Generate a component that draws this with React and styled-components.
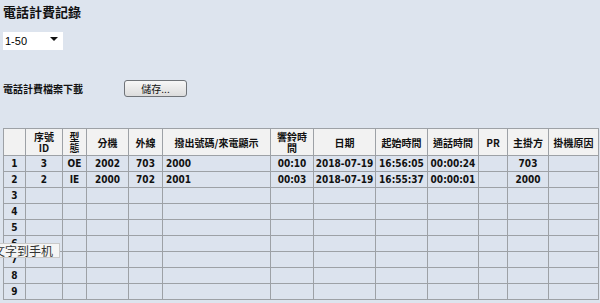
import React from 'react';
import styled, { createGlobalStyle } from 'styled-components';

const GlobalStyle = createGlobalStyle`
  html, body {
    margin: 0;
    padding: 0;
    background: #dde4ee;
    overflow: hidden;
  }
`;

const Page = styled.div`
  position: relative;
  width: 600px;
  height: 303px;
  padding: 3px 0 0 3px;
  box-sizing: border-box;
  background: #dde4ee;
  font-family: 'DejaVu Sans', 'Noto Sans CJK TC', sans-serif;
  color: #111;
`;

const Title = styled.h1`
  margin: 0;
  height: 18px;
  font-family: 'Noto Sans CJK TC', sans-serif;
  font-size: 13px;
  font-weight: 700;
  line-height: 18px;
`;

const SelectWrap = styled.div`
  position: relative;
  width: 60px;
  height: 18px;
  margin-top: 9px;
  &::after {
    content: '';
    position: absolute;
    right: 5px;
    top: 7px;
    border-left: 4px solid transparent;
    border-right: 4px solid transparent;
    border-top: 4px solid #111;
    pointer-events: none;
  }
`;

const RangeSelect = styled.select`
  appearance: none;
  width: 100%;
  height: 100%;
  border: none;
  outline: none;
  background: #fff;
  padding: 0 0 0 2px;
  font-family: 'Liberation Sans', Arial, sans-serif;
  font-size: 11px;
  color: #000;
`;

const DownloadRow = styled.div`
  display: flex;
  align-items: center;
  height: 17px;
  margin-top: 32px;
`;

const DownloadLabel = styled.span`
  width: 121px;
  font-family: 'Noto Sans CJK TC', sans-serif;
  font-size: 10px;
  font-weight: 700;
`;

const SaveButton = styled.button`
  width: 63px;
  height: 17px;
  padding: 0;
  border: 1px solid #6f7378;
  border-radius: 3px;
  background: linear-gradient(#f7f7f7, #dcdcdc);
  font-family: 'Noto Sans CJK TC', sans-serif;
  font-size: 10px;
  line-height: 14px;
  color: #111;
`;

const Grid = styled.table`
  margin-top: 31px;
  width: 595px;
  border-collapse: collapse;
  table-layout: fixed;
`;

const HeadCell = styled.th`
  height: 26px;
  padding: 0;
  border: 1px solid #9da1a6;
  background: #f2f2f2;
  font-family: 'Noto Sans CJK TC', sans-serif;
  font-size: 10px;
  font-weight: 700;
  line-height: 11px;
  text-align: center;
  color: #111;
`;

const Cell = styled.td`
  height: 15px;
  padding: 0 ${p => (p.$align === 'left' ? '3px' : '0')};
  border: 1px solid #9da1a6;
  background: #dce3ee;
  font-family: 'DejaVu Sans Condensed', 'DejaVu Sans', sans-serif;
  font-size: 10px;
  font-weight: 700;
  line-height: 14px;
  text-align: ${p => p.$align || 'center'};
  white-space: nowrap;
  overflow: hidden;
  color: #111;
`;

const Tooltip = styled.div`
  position: absolute;
  left: -10px;
  top: 243px;
  width: 70px;
  height: 15px;
  padding-left: 2px;
  box-sizing: border-box;
  border: 1px solid #c9c9c9;
  background: #f5f5f5;
  font-family: 'Noto Sans CJK SC', sans-serif;
  font-size: 12px;
  line-height: 13px;
  color: #333;
`;

const widths = [22, 37, 24, 42, 34, 108, 43, 62, 52, 51, 29, 41, 50];

const headers = [
  '',
  <>序號<br />ID</>,
  <>型<br />態</>,
  '分機',
  '外線',
  '撥出號碼/來電顯示',
  <>響鈴時<br />間</>,
  '日期',
  '起始時間',
  '通話時間',
  'PR',
  '主掛方',
  '掛機原因',
];

const records = [
  ['3', 'OE', '2002', '703', '2000', '00:10', '2018-07-19', '16:56:05', '00:00:24', '', '703', ''],
  ['2', 'IE', '2000', '702', '2001', '00:03', '2018-07-19', '16:55:37', '00:00:01', '', '2000', ''],
];

const App = () => {
  const rows = Array.from({ length: 9 }, (_, i) => records[i] || Array(12).fill(''));

  return (
    <Page>
      <GlobalStyle />
      <Title>電話計費記錄</Title>
      <SelectWrap>
        <RangeSelect defaultValue="1-50">
          <option>1-50</option>
        </RangeSelect>
      </SelectWrap>
      <DownloadRow>
        <DownloadLabel>電話計費檔案下載</DownloadLabel>
        <SaveButton>儲存...</SaveButton>
      </DownloadRow>
      <Grid>
        <colgroup>
          {widths.map((w, i) => <col key={i} style={{ width: w }} />)}
        </colgroup>
        <thead>
          <tr>
            {headers.map((h, i) => <HeadCell key={i}>{h}</HeadCell>)}
          </tr>
        </thead>
        <tbody>
          {rows.map((r, i) => (
            <tr key={i}>
              <Cell>{i + 1}</Cell>
              {r.map((v, j) => (
                <Cell key={j} $align={j === 4 ? 'left' : 'center'}>{v}</Cell>
              ))}
            </tr>
          ))}
        </tbody>
      </Grid>
      <Tooltip>文字到手机</Tooltip>
    </Page>
  );
};

export default App;
